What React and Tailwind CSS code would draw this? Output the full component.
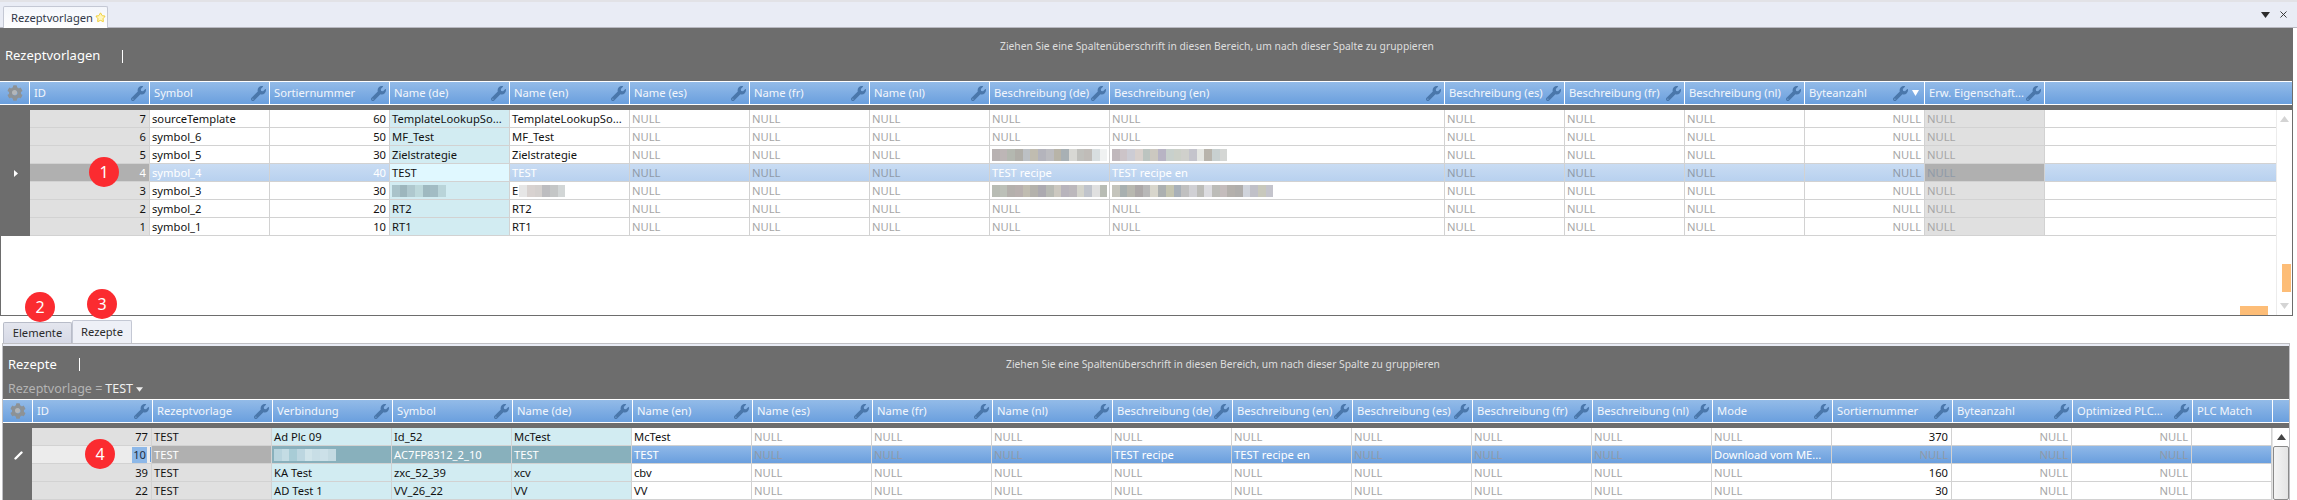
import React from "react";
import { FaWrench, FaCog } from "react-icons/fa";
import { Star, X } from "lucide-react";

const W = "w-[120px]";
const WL = "w-[335px]";
const WS = "w-[80px]";

const upperCols = [
  { h: "ID", w: W, tone: "gray", right: true },
  { h: "Symbol", w: W },
  { h: "Sortiernummer", w: W, right: true },
  { h: "Name (de)", w: W, tone: "cyan" },
  { h: "Name (en)", w: W },
  { h: "Name (es)", w: W },
  { h: "Name (fr)", w: W },
  { h: "Name (nl)", w: W },
  { h: "Beschreibung (de)", w: W },
  { h: "Beschreibung (en)", w: WL },
  { h: "Beschreibung (es)", w: W },
  { h: "Beschreibung (fr)", w: W },
  { h: "Beschreibung (nl)", w: W },
  { h: "Byteanzahl", w: W, right: true, sort: true },
  { h: "Erw. Eigenschaft...", w: W, tone: "gray" },
];

const lowerCols = [
  { h: "ID", w: W, tone: "gray", right: true },
  { h: "Rezeptvorlage", w: W, tone: "gray" },
  { h: "Verbindung", w: W, tone: "cyan" },
  { h: "Symbol", w: W, tone: "cyan" },
  { h: "Name (de)", w: W, tone: "cyan" },
  { h: "Name (en)", w: W },
  { h: "Name (es)", w: W },
  { h: "Name (fr)", w: W },
  { h: "Name (nl)", w: W },
  { h: "Beschreibung (de)", w: W },
  { h: "Beschreibung (en)", w: W },
  { h: "Beschreibung (es)", w: W },
  { h: "Beschreibung (fr)", w: W },
  { h: "Beschreibung (nl)", w: W },
  { h: "Mode", w: W },
  { h: "Sortiernummer", w: W, right: true },
  { h: "Byteanzahl", w: W, right: true },
  { h: "Optimized PLC...", w: W, right: true },
  { h: "PLC Match", w: WS, noWrench: true },
];

const N = "NULL";
const tealBlur = ["#a9c3ca", "#9db6bd", "#afc8ce", "#bdd8db", "#9fb9c0", "#a2bcc4", "#b9d4d9"];
const lightBlur = ["#e6e6e6", "#d8d2d0", "#d4d0ce", "#bdbdc0", "#c4c6c6", "#d2d6d6"];
const descA = ["#b8b2b2", "#bdb6b6", "#b4b8b0", "#b0aea8", "#bcc0c4", "#c0bcb0", "#b4b4bc", "#bcbcc0", "#b8b4a8", "#a8b0b4", "#d8d8d4", "#c0c0bc", "#c0bcb8", "#d8dee0", "#f0f2f2"];
const descB = ["#c0b8bc", "#ccc4c8", "#ccccd4", "#d8d0cc", "#bcc4c0", "#ccc8c0", "#b8b4c4", "#c8d0cc", "#ccd0c8", "#d0d0cc", "#c4c4cc", "#e4e6e2", "#b8b4ac", "#c8d0d0", "#d4d6d4"];
const descC = ["#b8bcb4", "#bcc0b8", "#b4b0ac", "#b8b0ae", "#c0bcb0", "#b4b2ac", "#acaab0", "#b8bab4", "#ccc8c0", "#b8b4bc", "#bcb8bc", "#d4d4cc", "#c0c4cc", "#e0e0e0"];
const descD = ["#c4c4bc", "#a8b0b0", "#b8b8b0", "#aca8a8", "#b8b8b8", "#d8d6cc", "#acb0b0", "#c4c4b0", "#a8b0b8", "#c0c0c0", "#d0d0d4", "#bcbcb8", "#dcdce0", "#bcbcb8", "#c4bcbc", "#b4b0ac", "#b0aeac", "#d0d4dc", "#c0c0c8", "#c8c8bc", "#c4c4cc"];
const connBlur = ["#b8d4de", "#c4dce4", "#a8ccd6", "#bcd6e0", "#d0e4ea", "#c8dee6", "#cce0e8", "#c4dae2"];

const Mosaic = ({ colors, prefix }) => (
  <span className="flex items-center">
    {prefix ? <span className="mr-[1px]">{prefix}</span> : null}
    {colors.map((c, i) => (
      <span key={i} className="block w-[7.7px] h-[12px]" style={{ backgroundColor: c }} />
    ))}
  </span>
);

const upperRows = [
  { v: ["7", "sourceTemplate", "60", "TemplateLookupSo...", "TemplateLookupSo...", N, N, N, N, N, N, N, N, N, N] },
  { v: ["6", "symbol_6", "50", "MF_Test", "MF_Test", N, N, N, N, N, N, N, N, N, N] },
  { v: ["5", "symbol_5", "30", "Zielstrategie", "Zielstrategie", N, N, N, <Mosaic colors={descA} />, <Mosaic colors={descB} />, N, N, N, N, N] },
  { sel: true, v: ["4", "symbol_4", "40", "TEST", "TEST", N, N, N, "TEST recipe", "TEST recipe en", N, N, N, N, N] },
  { v: ["3", "symbol_3", "30", <Mosaic colors={tealBlur} />, <Mosaic colors={lightBlur} prefix="E" />, N, N, N, <Mosaic colors={descC.concat(descC[0])} />, <Mosaic colors={descD} />, N, N, N, N, N] },
  { v: ["2", "symbol_2", "20", "RT2", "RT2", N, N, N, N, N, N, N, N, N, N] },
  { v: ["1", "symbol_1", "10", "RT1", "RT1", N, N, N, N, N, N, N, N, N, N] },
];

const lowerRows = [
  { v: ["77", "TEST", "Ad Plc 09", "Id_52", "McTest", "McTest", N, N, N, N, N, N, N, N, N, "370", N, N, ""] },
  { sel: true, v: [
    <span className="flex items-center h-[18px]"><span className="bg-[#8db8e8] text-[#1c2c40] px-[1px]">10</span><span className="w-[1px] h-[15px] bg-[#6a9fde] ml-[3px] -mr-[3px]" /></span>,
    "TEST", <Mosaic colors={connBlur} />, "AC7FP8312_2_10", "TEST", "TEST", N, N, N, "TEST recipe", "TEST recipe en", N, N, N, "Download vom ME...", N, N, N, ""] },
  { v: ["39", "TEST", "KA Test", "zxc_52_39", "xcv", "cbv", N, N, N, N, N, N, N, N, N, "160", N, N, ""] },
  { v: ["22", "TEST", "AD Test 1", "VV_26_22", "VV", "VV", N, N, N, N, N, N, N, N, N, "30", N, N, ""] },
];

function Header({ cols, gearW }) {
  return (
    <div className="flex h-[24px] border-y border-white bg-gradient-to-b from-[#93bbe8] to-[#6a9fde] text-[#f2f6fc]">
      <div className={`${gearW} shrink-0 relative flex items-center justify-center border-r border-white`}>
        <FaCog className="w-[16px] h-[16px] text-[#8d9296]" />
        <span className="absolute left-[12px] top-[8px] w-[5px] h-[5px] rounded-full bg-[#b4b6b8]" />
      </div>
      {cols.map((c) => (
        <div key={c.h} className={`${c.w} shrink-0 relative flex items-center pl-[4px] border-r border-white whitespace-nowrap`}>
          <span>{c.h}</span>
          {c.noWrench ? null : (
            <span className={c.sort ? "ml-auto mr-[16px] flex" : "ml-auto mr-[3px] flex"}>
              <FaWrench className="w-[15px] h-[15px] text-[#4a77ab]" />
            </span>
          )}
          {c.sort ? (
            <svg className="absolute right-[5px] top-[8px]" width="7" height="6" viewBox="0 0 7 6"><path d="M0 0h7L3.5 6z" fill="#fff" /></svg>
          ) : null}
        </div>
      ))}
      <div className="flex-1" />
    </div>
  );
}

function Row({ cols, row, variant }) {
  const sel = row.sel;
  const rowBg = !sel
    ? "bg-white"
    : variant === "upper"
      ? "bg-gradient-to-b from-[#c9dcf3] to-[#b8d1ef]"
      : "bg-gradient-to-b from-[#8fb8e8] to-[#6a9fde]";
  return (
    <div className={`flex h-[18px] border-b border-[#d2d2d2] ${rowBg}`}>
      {cols.map((c, i) => {
        const val = row.v[i];
        let bg = "";
        let txt = sel ? "text-white" : "text-[#111111]";
        if (val === N) txt = sel ? "text-[#8f9aa8]" : "text-[#a6a6a6]";
        if (c.tone === "gray") {
          bg = sel ? "bg-[#b0b0b0]" : "bg-[#e0e0e0]";
          if (sel && variant === "lower" && i === 0) {
            bg = "bg-[#ececec]";
          }
        }
        if (c.tone === "cyan") {
          if (sel && variant === "upper") {
            bg = "bg-[#e0f8ff]";
            txt = "text-[#111111]";
          } else if (sel) {
            bg = "bg-[#88b0bc]";
          } else {
            bg = "bg-[#d2ecf2]";
          }
        }
        return (
          <div
            key={c.h}
            className={`${c.w} shrink-0 flex items-center overflow-hidden whitespace-nowrap border-r border-[#d2d2d2] ${c.right ? "justify-end pr-[3px]" : "pl-[2px]"} ${bg} ${txt}`}
          >
            {val}
          </div>
        );
      })}
      <div className="flex-1" />
    </div>
  );
}

const Triangle = ({ className, up, fill }) => (
  <svg className={className} width="9" height="6" viewBox="0 0 9 6">
    <path d={up ? "M0 6h9L4.5 0z" : "M0 0h9L4.5 6z"} fill={fill} />
  </svg>
);

const Badge = ({ n, className }) => (
  <div className={`absolute w-[30px] h-[30px] rounded-full bg-[#fb2b30] text-white text-[16px] flex items-center justify-center ${className}`}>
    {n}
  </div>
);

export default function App() {
  return (
    <div className="relative w-[2297px] h-[500px] overflow-hidden bg-white text-[11.2px] leading-[16px] font-['Noto_Sans',sans-serif]">
      <div className="h-[2px] bg-[#e2e2e6]" />
      <div className="h-[26px] bg-[#e9ecf5] border-b border-[#b8b8c0] flex items-end pl-[3px] pr-[8px]">
        <div className="h-[22px] w-[105px] -mb-[1px] bg-gradient-to-b from-[#f4f6fb] to-white border border-b-0 border-[#c4c8d4] rounded-t-[2px] flex items-center pl-[7px] text-[#303848] whitespace-nowrap">
          <span>Rezeptvorlagen</span>
          <Star className="w-[11px] h-[11px] ml-[2px] text-[#f0cc2a]" fill="#fff6c0" strokeWidth={2} />
        </div>
        <div className="ml-auto flex items-center self-center gap-[8px] text-[#2b2b2b]">
          <Triangle fill="#2b2b2b" />
          <X className="w-[11px] h-[11px]" strokeWidth={2} />
        </div>
      </div>

      <div className="mr-[4px] border-r border-[#6d6d6d] border-b">
        <div className="h-[53px] bg-[#6d6d6d] flex items-start pl-[5px] text-white">
          <div className="w-[117px] mt-[18px] text-[13px] leading-[18px]">Rezeptvorlagen</div>
          <div className="w-[1px] h-[13px] bg-white mt-[22px]" />
          <div className="ml-[877px] mt-[10px] text-[10.3px] text-[#dedede] whitespace-nowrap">
            Ziehen Sie eine Spaltenüberschrift in diesen Bereich, um nach dieser Spalte zu gruppieren
          </div>
        </div>
        <Header cols={upperCols} gearW="w-[30px]" />
        <div className="h-[5px] bg-[#6d6d6d]" />
        <div className="flex h-[205px] border-l border-[#6d6d6d]">
          <div className="w-[29px] h-[126px] shrink-0 bg-[#6d6d6d] flex flex-col">
            <div className="h-[54px]" />
            <div className="h-[18px] flex items-center pl-[13px]">
              <svg width="4" height="7" viewBox="0 0 4 7"><path d="M0 0l4 3.5L0 7z" fill="#fff" /></svg>
            </div>
          </div>
          <div className="flex-1 min-w-0">
            {upperRows.map((r, i) => (
              <Row key={i} cols={upperCols} row={r} variant="upper" />
            ))}
          </div>
          <div className="w-[16px] shrink-0 border-l border-[#ececec] flex flex-col items-center justify-between py-[6px]">
            <Triangle up fill="#d4d4d4" />
            <Triangle fill="#d4d4d4" />
          </div>
        </div>
      </div>

      <div className="h-[4px]" />
      <div className="flex items-end pl-[3px] h-[23px]">
        <div className="w-[69px] h-[21px] bg-gradient-to-b from-[#e4e6ee] to-[#d6d9e6] border border-b-0 border-[#b8bcc8] rounded-t-[2px] flex items-center justify-center text-[#2a2a2a]">
          Elemente
        </div>
        <div className="w-[60px] h-[23px] bg-[#eef0f7] border border-b-0 border-[#c4c8d4] rounded-t-[2px] flex items-center justify-center text-[#2a2a2a]">
          Rezepte
        </div>
      </div>
      <div className="ml-[2px] mr-[7px] border-t border-l border-r border-[#c0c0c4] pt-[2px] bg-[#e9ecf5]">
        <div className="h-[53px] bg-[#6d6d6d] flex flex-col text-white">
          <div className="flex items-start pl-[5px] h-[35px]">
            <div className="w-[71px] mt-[9px] text-[13px] leading-[18px]">Rezepte</div>
            <div className="w-[1px] h-[13px] bg-white mt-[12px]" />
            <div className="ml-[926px] mt-[10px] text-[10.3px] text-[#dedede] whitespace-nowrap">
              Ziehen Sie eine Spaltenüberschrift in diesen Bereich, um nach dieser Spalte zu gruppieren
            </div>
          </div>
          <div className="pl-[5px] flex items-center text-[12.5px] text-[#b4b4b4] whitespace-nowrap">
            <span>Rezeptvorlage = </span>
            <span className="text-[#f0f0f0] ml-[3px]">TEST</span>
            <Triangle className="ml-[3px] w-[7px] h-[5px]" fill="#eee" />
          </div>
        </div>
        <Header cols={lowerCols} gearW="w-[30px]" />
        <div className="h-[5px] bg-[#6d6d6d]" />
        <div className="flex bg-white">
          <div className="w-[29px] shrink-0 bg-[#6d6d6d] flex flex-col">
            <div className="h-[18px]" />
            <div className="h-[18px] flex items-center justify-center pl-[2px]">
              <svg width="9" height="9" viewBox="0 0 9 9"><path d="M1.5 7.5L7.5 1.5" stroke="#fff" strokeWidth="2.4" strokeLinecap="round" /></svg>
            </div>
          </div>
          <div className="flex-1 min-w-0">
            {lowerRows.map((r, i) => (
              <Row key={i} cols={lowerCols} row={r} variant="lower" />
            ))}
          </div>
          <div className="w-[17px] shrink-0 border-l border-[#e4e4e4] flex flex-col">
            <div className="h-[18px] flex items-center justify-center">
              <Triangle up fill="#444" />
            </div>
            <div className="flex-1 border border-[#8a8a8a] rounded-[2px] bg-gradient-to-r from-[#f4f4f4] to-[#e4e4e4]" />
          </div>
        </div>
      </div>

      <Badge n="1" className="left-[89px] top-[157px]" />
      <Badge n="2" className="left-[25px] top-[292px]" />
      <Badge n="3" className="left-[87px] top-[289px]" />
      <Badge n="4" className="left-[85px] top-[439px]" />
      <div className="absolute left-[2282px] top-[264px] w-[9px] h-[28px] bg-[#fdbd77]" />
      <div className="absolute left-[2240px] top-[306px] w-[28px] h-[9px] bg-[#fdbd77]" />
    </div>
  );
}
